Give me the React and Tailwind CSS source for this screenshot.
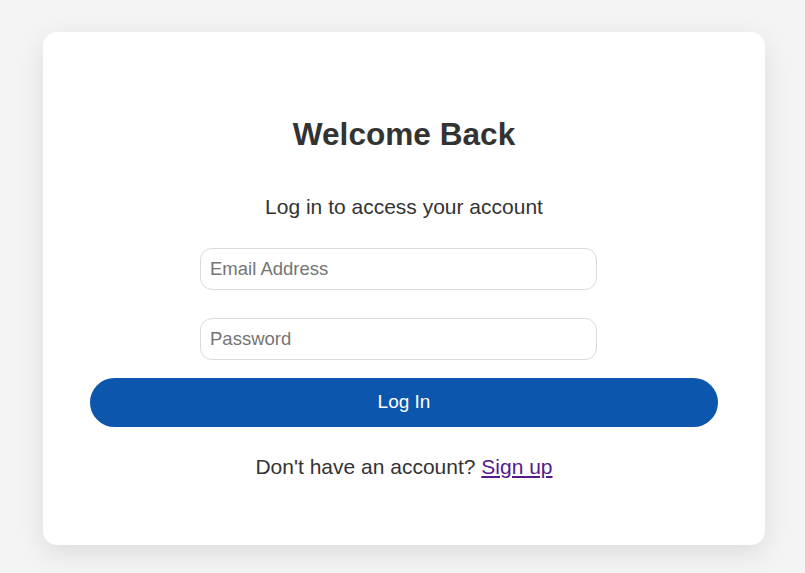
import React, { useState } from 'react';

const App = () => {
  const [email, setEmail] = useState('');
  const [password, setPassword] = useState('');

  const handleSubmit = (e) => {
    e.preventDefault();
  };

  return (
    <div className="min-h-screen bg-[#f4f4f4] pt-[32px] pl-[43px] font-['Liberation_Sans',Arial,sans-serif] text-[#333]">
      <div className="w-[722px] bg-white rounded-[14px] shadow-[0_8px_28px_rgba(0,0,0,0.1)] px-[47px] pt-[82px] pb-[66px]">
        <h1 className="text-[31.6px] leading-[40px] font-bold text-center">Welcome Back</h1>
        <p className="mt-[41px] text-[21px] leading-[24px] text-center">Log in to access your account</p>

        <form onSubmit={handleSubmit} className="flex flex-col mt-[29px]">
          <input
            type="email"
            value={email}
            onChange={(e) => setEmail(e.target.value)}
            placeholder="Email Address"
            className="ml-[110px] w-[397px] h-[42px] px-[9px] border border-[#dadada] rounded-[12px] text-[18.5px] text-[#333] placeholder:text-[#757575] outline-none"
          />
          <input
            type="password"
            value={password}
            onChange={(e) => setPassword(e.target.value)}
            placeholder="Password"
            className="ml-[110px] mt-[28px] w-[397px] h-[42px] px-[9px] border border-[#dadada] rounded-[12px] text-[18.5px] text-[#333] placeholder:text-[#757575] outline-none"
          />
          <button
            type="submit"
            className="mt-[18px] w-full h-[49px] rounded-full bg-[#0c56ae] text-white text-[19px]"
          >
            Log In
          </button>
        </form>

        <p className="mt-[28px] text-[21px] leading-[24px] text-center">
          Don't have an account?{' '}
          <a href="#" className="text-[#551a8b] underline">Sign up</a>
        </p>
      </div>
    </div>
  );
};

export default App;
